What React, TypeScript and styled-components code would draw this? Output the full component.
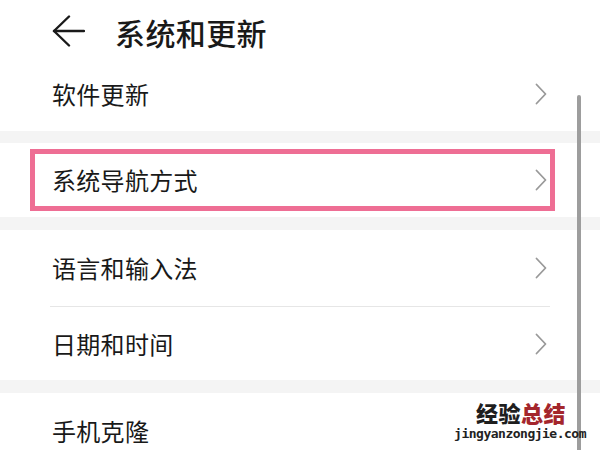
import React from "react";
import styled, { createGlobalStyle } from "styled-components";

const Global = createGlobalStyle`
  html, body { margin: 0; padding: 0; background: #fff; }
  body { font-family: "Noto Sans CJK SC", "Noto Sans", sans-serif; }
  * { box-sizing: border-box; }
`;

const Screen = styled.div`
  position: relative;
  width: 600px;
  height: 450px;
  overflow: hidden;
  background: #ffffff;
  color: #191919;
`;

const Header = styled.div`
  display: flex;
  align-items: center;
  height: 56px;
  padding: 6px 0 0 52px;
  gap: 30px;
`;

const Title = styled.div`
  font-size: 30px;
  line-height: 1;
  font-weight: 500;
  margin-top: 1px;
  letter-spacing: 0.4px;
`;

const Row = styled.div<{ $h: number }>`
  position: relative;
  display: flex;
  align-items: center;
  justify-content: space-between;
  height: ${(p) => p.$h}px;
  padding: 0 53px 0 52px;
`;

const Label = styled.span`
  font-size: 24px;
  line-height: 1;
  letter-spacing: 0.3px;
`;

const Band = styled.div<{ $h: number }>`
  height: ${(p) => p.$h}px;
  background: #f4f4f4;
`;

const Divider = styled.div`
  height: 1px;
  background: #e6e6e6;
  margin: 0 50px 0 50px;
`;

const Highlight = styled.div`
  position: absolute;
  left: 30px;
  right: 45px;
  top: 6px;
  bottom: 6px;
  border: 5px solid #ee6e94;
  pointer-events: none;
`;

const ScrollBar = styled.div`
  position: absolute;
  left: 577px;
  top: 95px;
  width: 4px;
  bottom: 0;
  border-radius: 2px 2px 0 0;
  background: #9d9d9d;
`;

const Watermark = styled.div`
  position: absolute;
  left: 450px;
  top: 401px;
  display: flex;
  flex-direction: column;
  align-items: flex-end;
  gap: 4px;
  width: 136px;
`;

const WmTop = styled.div`
  font-size: 22px;
  line-height: 22px;
  font-weight: 900;
  letter-spacing: 0.5px;
  color: #1e1e1e;
  margin-right: 20px;
`;

const WmRed = styled.span`
  color: #a4262c;
`;

const WmBottom = styled.div`
  font-family: "DejaVu Sans Mono", "Liberation Mono", monospace;
  font-size: 13px;
  line-height: 14px;
  font-weight: bold;
  color: #222;
  letter-spacing: -0.5px;
`;

const Chevron = () => (
  <svg width="12" height="22" viewBox="0 0 12 22" fill="none">
    <polyline
      points="1.5,1.5 10.5,11 1.5,20.5"
      stroke="#999999"
      strokeWidth="1.8"
      strokeLinecap="round"
      strokeLinejoin="round"
    />
  </svg>
);

const BackArrow = () => (
  <svg width="33" height="32" viewBox="0 0 33 32" fill="none">
    <polyline
      points="17,1.5 2,16 17,30.5"
      stroke="#1a1a1a"
      strokeWidth="2.4"
      strokeLinecap="round"
      strokeLinejoin="round"
    />
    <line x1="2" y1="16" x2="32" y2="16" stroke="#1a1a1a" strokeWidth="2.4" strokeLinecap="round" />
  </svg>
);

export default function App() {
  return (
    <Screen>
      <Global />
      <Header>
        <BackArrow />
        <Title>系统和更新</Title>
      </Header>
      <Row $h={75}>
        <Label>软件更新</Label>
        <Chevron />
      </Row>
      <Band $h={12} />
      <Row $h={74}>
        <Label>系统导航方式</Label>
        <Chevron />
        <Highlight />
      </Row>
      <Band $h={13} />
      <Row $h={76}>
        <Label>语言和输入法</Label>
        <Chevron />
      </Row>
      <Divider />
      <Row $h={73}>
        <Label>日期和时间</Label>
        <Chevron />
      </Row>
      <Band $h={13} />
      <Row $h={76}>
        <Label>手机克隆</Label>
      </Row>
      <ScrollBar />
      <Watermark>
        <WmTop>
          经验<WmRed>总结</WmRed>
        </WmTop>
        <WmBottom>jingyanzongjie.com</WmBottom>
      </Watermark>
    </Screen>
  );
}
